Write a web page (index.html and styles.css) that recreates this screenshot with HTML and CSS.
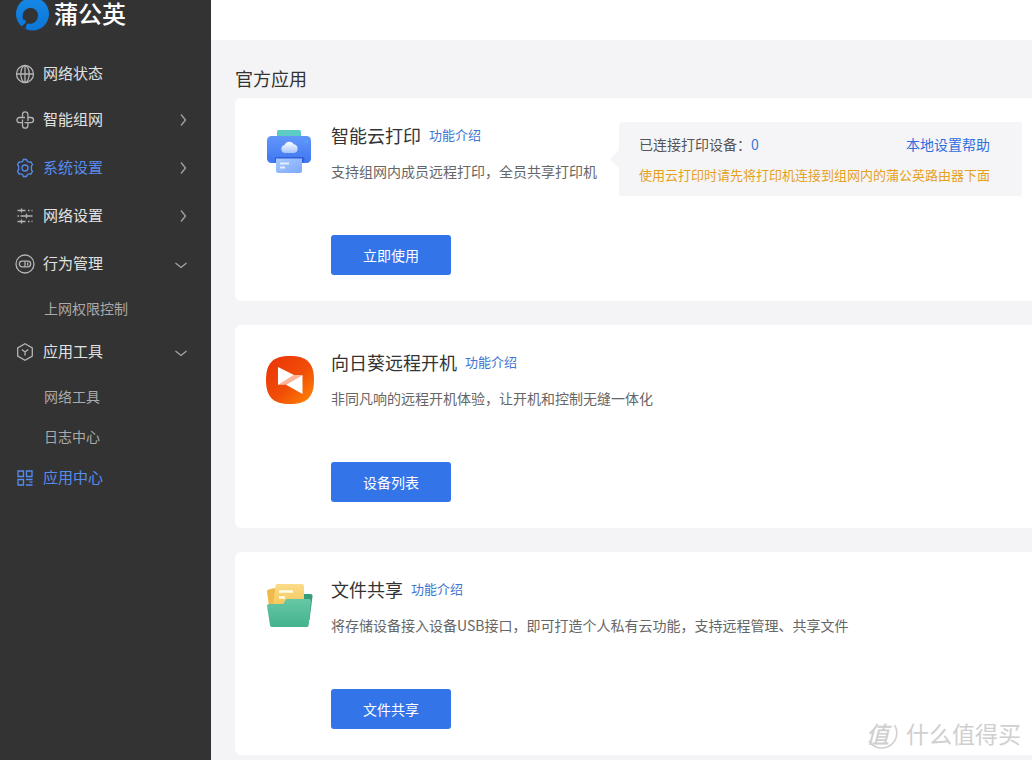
FILE: index.html
```html
<!DOCTYPE html>
<html lang="zh-CN">
<head>
<meta charset="utf-8">
<title>蒲公英 - 应用中心</title>
<link rel="stylesheet" href="styles.css">
</head>
<body>
<div class="layout">
  <aside class="sidebar">
    <div class="brand">
      <svg class="brand-logo" viewBox="0 0 34 34" aria-hidden="true">
        <defs><linearGradient id="brandFill" x1="0" y1="0" x2="0" y2="1"><stop offset="0" stop-color="#1688e4"/><stop offset="1" stop-color="#0b76d8"/></linearGradient></defs>
        <circle cx="17.500" cy="17" r="16.500" fill="url(#brandFill)"/>
        <path d="M8 22.500C6.500 16 10 11 15.500 11c4.500 0 7.500 3.300 7.500 7.500 0 4.700-3.600 8.300-8.500 8.300l-2-.3c-1 .8-1.500 2.500-1.800 5.500L6 29.500c2.500-1.500 4.500-3 5-5-.4-1.600-1.500-2.300-3-2z" fill="#333334"/>
      </svg>
      <span class="brand-name">蒲公英</span>
    </div>
    <nav class="nav">
      <a class="item leaf" href="#">
        <svg class="icon" viewBox="0 0 20 20" aria-hidden="true"><circle cx="10" cy="10" r="8.500"/><ellipse cx="10" cy="10" rx="4.200" ry="8.500"/><path d="M10 1.500v17M1.500 10h17"/></svg>
        <span class="label">网络状态</span>
      </a>
      <a class="item" href="#">
        <svg class="icon" viewBox="0 0 20 20" aria-hidden="true"><path d="M7.500 7.500V4.500a2.700 2.700 0 0 1 5.400 0v6.500M12.900 7.500h3a2.600 2.600 0 0 1 0 5.200H9.500M12.900 12.700v2.800a2.700 2.700 0 0 1-5.400 0V9.500M7.500 12.700h-3a2.600 2.600 0 0 1 0-5.200h5.500"/></svg>
        <span class="label">智能组网</span>
        <svg class="arrow" viewBox="0 0 14 14" aria-hidden="true"><path d="M6 1.500L10.500 7 6 12.500"/></svg>
      </a>
      <a class="item active" href="#">
        <svg class="icon" viewBox="0 0 20 20" aria-hidden="true"><path d="M7.700 3.200L8.500 1.500h3l.8 1.700 1.700 1 2-.2 1.500 2.600L16.400 8.200v3.600l1.100 1.600L16 16l-2-.2-1.700 1-.8 1.700h-3l-.8-1.700-1.700-1-2 .2-1.500-2.600 1.100-1.600V8.200L2.500 6.600 4 4l2 .2z"/><circle cx="10" cy="10" r="3"/></svg>
        <span class="label">系统设置</span>
        <svg class="arrow" viewBox="0 0 14 14" aria-hidden="true"><path d="M6 1.500L10.500 7 6 12.500"/></svg>
      </a>
      <a class="item" href="#">
        <svg class="icon" viewBox="0 0 20 20" aria-hidden="true"><path d="M2.500 4.500h8M6.500 2.500v4M13 4.500h1.500M16.500 4.500h1M2.500 10h1.500M5.500 10h3M8.500 10h9M11.500 7.800v4.400M2.500 15.500h8M6.500 13.500v4M13 15.500h1.500M16.500 15.500h1"/></svg>
        <span class="label">网络设置</span>
        <svg class="arrow" viewBox="0 0 14 14" aria-hidden="true"><path d="M6 1.500L10.500 7 6 12.500"/></svg>
      </a>
      <a class="item" href="#">
        <svg class="icon" viewBox="0 0 20 20" aria-hidden="true"><circle cx="10" cy="10" r="9"/><rect x="4.300" y="7.200" width="11.400" height="5.600" rx="2.800"/><path d="M10 7.200v5.600M12.700 8.500v3"/></svg>
        <span class="label">行为管理</span>
        <svg class="arrow" viewBox="0 0 14 14" aria-hidden="true"><path d="M0.500 6L6 10.500 11.500 6"/></svg>
      </a>
      <a class="subitem" href="#">上网权限控制</a>
      <a class="item" href="#">
        <svg class="icon" viewBox="0 0 20 20" aria-hidden="true"><path d="M10 1.800l7.300 4.100v8.200L10 18.200l-7.300-4.100V5.900zM6.800 7.500L10 10l3.200-2.500M10 10v3.500"/></svg>
        <span class="label">应用工具</span>
        <svg class="arrow" viewBox="0 0 14 14" aria-hidden="true"><path d="M0.500 6L6 10.500 11.500 6"/></svg>
      </a>
      <a class="subitem" href="#">网络工具</a>
      <a class="subitem" href="#">日志中心</a>
      <a class="item leaf active" href="#" aria-current="page">
        <svg class="icon" viewBox="0 0 20 20" aria-hidden="true"><path d="M3 3h5.500v5.500H3zM11.500 3H17v5.500h-5.500zM3 11.500h5.500V17H3zM11 11.500h6.500M14.500 14.200h3M11 17h6.500"/></svg>
        <span class="label">应用中心</span>
      </a>
    </nav>
  </aside>

  <div class="page">
    <header class="topbar"></header>
    <main class="content">
      <h1 class="heading">官方应用</h1>
      <div class="cards">
        <section class="card">
          <svg class="app-icon" viewBox="0 0 48 48" aria-hidden="true">
            <defs>
              <linearGradient id="printBody" x1="0" y1="0" x2="0" y2="1"><stop offset="0" stop-color="#6297f8"/><stop offset="1" stop-color="#3f76f2"/></linearGradient>
              <linearGradient id="printPaper" x1="0" y1="0" x2="1" y2="1"><stop offset="0" stop-color="#a9c9ff"/><stop offset="1" stop-color="#7da9fb"/></linearGradient>
              <linearGradient id="printCloud" x1="0" y1="0" x2="0" y2="1"><stop offset="0" stop-color="#fff"/><stop offset="1" stop-color="#a4c4fd"/></linearGradient>
            </defs>
            <path d="M11 11V5.500A1.500 1.500 0 0 1 12.500 4h21A1.500 1.500 0 0 1 35 5.500V11z" fill="#5bcdc4"/>
            <rect x="1" y="10" width="44" height="27" rx="4.500" fill="url(#printBody)"/>
            <path d="M8.500 33a2 2 0 0 1 2-2h26a2 2 0 0 1 2 2l-1.500 4H10z" fill="#2e5fd6"/>
            <path d="M10 32.500h26V45a2 2 0 0 1-2 2H12a2 2 0 0 1-2-2z" fill="url(#printPaper)"/>
            <path d="M19 27a4 4 0 0 1-.5-7.900 5.300 5.300 0 0 1 9.500-.8 4.500 4.500 0 0 1 .5 8.700z" fill="url(#printCloud)"/>
            <circle cx="40.500" cy="15.500" r="1.800" fill="#55a4f1"/>
            <path d="M14 37.500h9M14 41.500h5" stroke="#e3eeff" stroke-width="2"/>
          </svg>
          <div class="body">
            <div class="title-row"><h2 class="title">智能云打印</h2><a class="intro" href="#">功能介绍</a></div>
            <p class="desc">支持组网内成员远程打印，全员共享打印机</p>
            <button class="action" type="button">立即使用</button>
          </div>
          <div class="callout">
            <div class="callout-row"><span>已连接打印设备：<b class="count">0</b></span><a class="help" href="#">本地设置帮助</a></div>
            <p class="warning">使用云打印时请先将打印机连接到组网内的蒲公英路由器下面</p>
          </div>
        </section>

        <section class="card">
          <svg class="app-icon" viewBox="0 0 48 48" aria-hidden="true">
            <defs><linearGradient id="sunFill" x1="0" y1="0" x2="1" y2="1"><stop offset="0" stop-color="#ea3309"/><stop offset=".55" stop-color="#f14d08"/><stop offset="1" stop-color="#ff8a05"/></linearGradient></defs>
            <path d="M24 0C41 0 48 7 48 24S41 48 24 48 0 41 0 24 7 0 24 0z" fill="url(#sunFill)"/>
            <path d="M12 28.800L28 19h8.500L20 28.800z" fill="#ffb49a"/>
            <path d="M12 11l16 8-16 10zM36.500 19v19L20 28.800z" fill="#fff"/>
          </svg>
          <div class="body">
            <div class="title-row"><h2 class="title">向日葵远程开机</h2><a class="intro" href="#">功能介绍</a></div>
            <p class="desc">非同凡响的远程开机体验，让开机和控制无缝一体化</p>
            <button class="action" type="button">设备列表</button>
          </div>
        </section>

        <section class="card">
          <svg class="app-icon" viewBox="0 0 48 48" aria-hidden="true">
            <defs>
              <linearGradient id="folderFront" x1="0" y1="0" x2="0" y2="1"><stop offset="0" stop-color="#67c7a5"/><stop offset="1" stop-color="#43b38d"/></linearGradient>
              <linearGradient id="folderSheet" x1="0" y1="0" x2="0" y2="1"><stop offset="0" stop-color="#fbdc89"/><stop offset="1" stop-color="#f4c75c"/></linearGradient>
            </defs>
            <path d="M1 11.500A2 2 0 0 1 2.500 9.500L9 8v18H3z" fill="#efb94c"/>
            <path d="M34 19l3-4.500A2 2 0 0 1 39 14h5.500a2 2 0 0 1 2 2.500L43.500 40H34z" fill="#359c79"/>
            <path d="M9.500 6a2 2 0 0 1 2-2H36a2 2 0 0 1 2 2v20H7z" fill="url(#folderSheet)"/>
            <path d="M13 11.500h14M13 17.500h6" stroke="#fffbe9" stroke-width="2.400"/>
            <path d="M1 26a2 2 0 0 1 2-2h14.500l2-4a2 2 0 0 1 2-1H43a2 2 0 0 1 2 2.200l-2.300 23.800a2 2 0 0 1-2 2H6a2 2 0 0 1-2-1.700z" fill="url(#folderFront)"/>
          </svg>
          <div class="body">
            <div class="title-row"><h2 class="title">文件共享</h2><a class="intro" href="#">功能介绍</a></div>
            <p class="desc">将存储设备接入设备USB接口，即可打造个人私有云功能，支持远程管理、共享文件</p>
            <button class="action" type="button">文件共享</button>
          </div>
        </section>
      </div>
    </main>
  </div>
</div>
<div class="watermark">
  <span class="seal">值<svg class="seal-ring" viewBox="0 0 32 32" aria-hidden="true"><path d="M28.500 8A15 15 0 0 1 3 24"/></svg></span>
  <span>什么值得买</span>
</div>
</body>
</html>
```

FILE: styles.css
```css
* {
  box-sizing: border-box;
}

body {
  margin: 0;
  font-family: "Noto Sans CJK SC", "Noto Sans", sans-serif;
  font-size: 14px;
  color: #333;
  background: #f4f4f7;
}

a {
  text-decoration: none;
}

h1, h2, p {
  margin: 0;
  font-weight: 400;
}

.layout {
  display: flex;
  min-height: 100vh;
}

.sidebar {
  flex: 0 0 211px;
  background: #333334;
}

.brand {
  display: flex;
  align-items: center;
  gap: 5px;
  height: 28px;
  margin-bottom: 24px;
  padding-left: 15px;
}

.brand-logo {
  width: 34px;
  height: 34px;
}

.brand-name {
  padding-bottom: 2px;
  font-size: 24px;
  line-height: 26px;
  font-weight: 500;
  color: #fff;
}

.item {
  display: flex;
  align-items: center;
  height: 48px;
  padding: 0 22px 0 15px;
  color: #e2e2e2;
  font-size: 15px;
}

.leaf {
  height: 44px;
}

.icon {
  width: 20px;
  height: 20px;
  margin-right: 8px;
  fill: none;
  stroke: #b4b4b4;
  stroke-width: 1.3;
}

.label {
  flex: 1;
  padding-bottom: 2px;
  line-height: 22px;
}

.arrow {
  width: 14px;
  height: 14px;
  fill: none;
  stroke: #a5a5a5;
  stroke-width: 1.3;
}

.active {
  color: #568cf0;
}

.active .icon {
  stroke: #568cf0;
}

.subitem {
  display: block;
  padding-left: 44px;
  line-height: 40px;
  color: #aaa;
}

.page {
  flex: 1;
  min-width: 0;
}

.topbar {
  height: 40px;
  background: #fff;
}

.content {
  padding: 24px 0 5px 24px;
}

.heading {
  margin-bottom: 6px;
  font-size: 18px;
  line-height: 28px;
}

.cards {
  display: flex;
  flex-direction: column;
  gap: 24px;
}

.card {
  display: flex;
  align-items: flex-start;
  padding: 24px 10px 26px 31px;
  background: #fff;
  border-radius: 6px 0 0 6px;
}

.app-icon {
  flex: none;
  width: 48px;
  height: 48px;
  margin: 4px 17px 0 0;
}

.card:nth-child(2) .app-icon {
  margin-top: 7px;
}

.title-row {
  display: flex;
  align-items: center;
  gap: 8px;
}

.title {
  font-size: 18px;
  line-height: 26px;
}

.intro {
  font-size: 13px;
  line-height: 20px;
  color: #3f74cf;
}

.desc {
  margin-top: 11px;
  line-height: 24px;
  color: #666;
}

.action {
  display: block;
  width: 120px;
  height: 40px;
  margin-top: 52px;
  padding: 0;
  border: 0;
  border-radius: 3px;
  background: #3374e9;
  color: #fff;
  font-family: inherit;
  font-size: 14px;
}

.callout {
  position: relative;
  margin-left: 22px;
  padding: 11px 32px 10px 20px;
  border-radius: 3px;
  background: #f5f5f8;
  line-height: 22px;
  color: #555;
}

.callout::before {
  content: "";
  position: absolute;
  top: 28px;
  left: -9px;
  border: solid transparent;
  border-width: 9px 9px 9px 0;
  border-right-color: #f5f5f8;
}

.callout-row {
  display: flex;
  justify-content: space-between;
}

.count {
  font-weight: 400;
  color: #3478dc;
}

.help {
  color: #2e6fdb;
}

.warning {
  margin-top: 9px;
  font-size: 13px;
  color: #e5a11b;
}

.watermark {
  position: absolute;
  right: 11px;
  bottom: 10px;
  display: flex;
  align-items: center;
  gap: 8px;
  font-size: 23px;
  line-height: 34px;
  color: #cfcfcf;
  pointer-events: none;
}

.seal {
  position: relative;
  display: block;
  width: 32px;
  font-style: italic;
  font-weight: 500;
}

.seal-ring {
  position: absolute;
  top: 1px;
  left: 0;
  width: 32px;
  height: 32px;
  fill: none;
  stroke: #cfcfcf;
  stroke-width: 1.5;
}
```
